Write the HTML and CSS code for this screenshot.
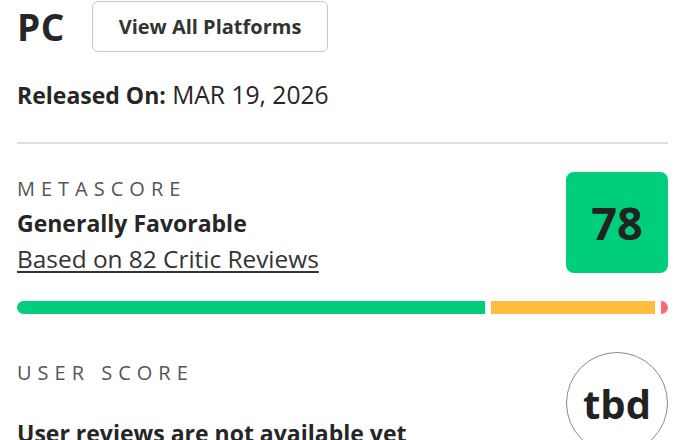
FILE: index.html
```html
<!DOCTYPE html>
<html>
<head>
<meta charset="utf-8">
<link rel="stylesheet" href="styles.css">
</head>
<body>
<div class="page">
  <div class="header">
    <div class="platform">PC</div>
    <button class="btn">View All Platforms</button>
  </div>
  <div class="release"><b>Released On:</b> MAR 19, 2026</div>
  <div class="divider"></div>
  <div class="score-row meta">
    <div class="score-text">
      <div class="label">METASCORE</div>
      <div class="verdict">Generally Favorable</div>
      <a class="count">Based on 82 Critic Reviews</a>
    </div>
    <div class="score-box">78</div>
  </div>
  <div class="bar">
    <span class="seg pos" style="flex: 467 0 0"></span>
    <span class="seg mix" style="flex: 163 0 0"></span>
    <span class="seg neg" style="flex: 7 0 0"></span>
  </div>
  <div class="score-row user">
    <div class="score-text">
      <div class="label">USER SCORE</div>
      <div class="verdict user-verdict">User reviews are not available yet</div>
    </div>
    <div class="score-circle">tbd</div>
  </div>
</div>
</body>
</html>
```
FILE: styles.css
```css
html, body {
  margin: 0;
  padding: 0;
  background: #fff;
}
body {
  font-family: "Open Sans", Lato, sans-serif;
  color: #262626;
  overflow: hidden;
  height: 440px;
}
.page {
  padding: 1px 18px 0 17px;
}
.header {
  display: flex;
  align-items: center;
  height: 51px;
}
.platform {
  font-size: 37px;
  font-weight: 700;
  width: 75px;
  letter-spacing: 0.5px;
}
.btn {
  font-family: inherit;
  height: 51px;
  width: 236px;
  border: 1px solid #c8c8c8;
  border-radius: 6px;
  background: #fff;
  font-size: 20px;
  font-weight: 700;
  color: #333;
  padding: 0;
}
.release {
  margin-top: 29px;
  font-size: 24.6px;
  line-height: 28px;
}
.release b {
  font-weight: 700;
  font-size: 23px;
}
.divider {
  margin-top: 33px;
  height: 2px;
  background: #dedede;
}
.score-row {
  display: flex;
  justify-content: space-between;
}
.meta {
  margin-top: 28px;
}
.score-text {
  display: flex;
  flex-direction: column;
  padding-top: 5px;
}
.label {
  font-size: 20px;
  line-height: 24px;
  letter-spacing: 6px;
  color: #555;
}
.verdict {
  margin-top: 8px;
  font-size: 23px;
  line-height: 28px;
  font-weight: 700;
}
.count {
  margin-top: 8px;
  font-size: 24.4px;
  line-height: 28px;
  color: #333;
  text-decoration: underline;
  text-underline-offset: 3px;
  text-decoration-thickness: 2px;
}
.score-box {
  width: 102px;
  height: 101px;
  border-radius: 8px;
  background: #00ce7a;
  display: flex;
  align-items: center;
  justify-content: center;
  font-size: 45px;
  font-weight: 700;
  color: #222;
}
.bar {
  display: flex;
  gap: 6px;
  margin-top: 28px;
  height: 13px;
}
.seg {
  display: block;
  height: 100%;
}
.pos {
  background: #00ce7a;
  border-radius: 7px 0 0 7px;
}
.mix {
  background: #ffbd3f;
}
.neg {
  background: #ff6874;
  border-radius: 0 7px 7px 0;
}
.user {
  margin-top: 38px;
}
.user .score-text {
  padding-top: 9px;
}
.user-verdict {
  margin-top: 34px;
}
.score-circle {
  width: 100px;
  height: 100px;
  border: 1px solid #8a8a8a;
  border-radius: 50%;
  display: flex;
  align-items: center;
  justify-content: center;
  font-size: 40px;
  font-weight: 700;
  color: #222;
}
```
